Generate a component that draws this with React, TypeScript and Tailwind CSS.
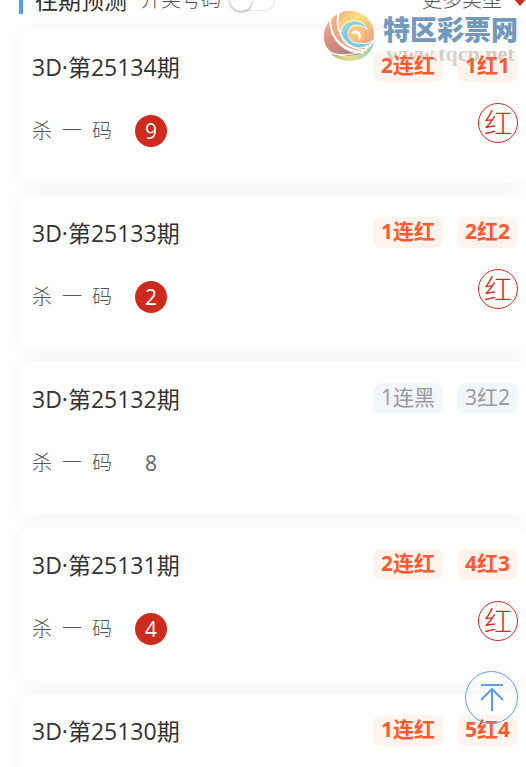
import React, { useState } from 'react';

interface IForecast {
	issue: string;
	code: number;
	hit: boolean;
	streak: string;
	record: string;
}

const forecasts: IForecast[] = [
	{ issue: '25134', code: 9, hit: true, streak: '2连红', record: '1红1' },
	{ issue: '25133', code: 2, hit: true, streak: '1连红', record: '2红2' },
	{ issue: '25132', code: 8, hit: false, streak: '1连黑', record: '3红2' },
	{ issue: '25131', code: 4, hit: true, streak: '2连红', record: '4红3' },
	{ issue: '25130', code: 6, hit: true, streak: '1连红', record: '5红4' },
];

const Badge: React.FC<{ hit: boolean; text: string }> = ({ hit, text }) => (
	<span
		className={
			hit
				? 'h-[31px] rounded-lg bg-[#fff4ed] px-2 text-[21px] leading-7 font-bold text-[#ff5a31]'
				: 'h-[31px] rounded-lg bg-[#f2f6fa] px-2 text-[21px] leading-7 text-[#999]'
		}
	>
		{text}
	</span>
);

const ForecastCard: React.FC<{ forecast: IForecast }> = ({ forecast }) => {
	const { issue, code, hit, streak, record } = forecast;

	return (
		<li className="flex h-[153px] flex-col rounded-xl bg-white pr-[10px] pl-[13px] shadow-[0_0_20px_rgba(0,0,0,0.05)]">
			<div className="flex items-start justify-between pt-[21px]">
				<h3 className="text-[23px] leading-8 text-[#333]">3D·第{issue}期</h3>
				<div className="flex gap-[14px]">
					<Badge hit={hit} text={streak} />
					<Badge hit={hit} text={record} />
				</div>
			</div>
			<div className="flex items-start justify-between pt-5">
				<div className="flex items-center pt-3">
					<span className="w-20 text-xl leading-8 font-light text-[#555] [text-align-last:justify]">杀 一 码</span>
					<span
						className={
							hit
								? 'ml-[23px] size-8 rounded-full bg-[#cf2a1e] text-center text-[21px] leading-8 text-white'
								: 'ml-[23px] size-8 text-center text-[21px] leading-8 text-[#666]'
						}
					>
						{code}
					</span>
				</div>
				{hit && (
					<span className="size-10 rounded-full border border-[#cf2a1e] text-center text-[28px] leading-[38px] font-light text-[#cf2a1e]">
						红
					</span>
				)}
			</div>
		</li>
	);
};

const Swirl: React.FC = () => (
	<svg viewBox="0 0 52 52" className="size-[52px]" aria-hidden="true">
		<defs>
			<linearGradient id="outer" x1="0.1" y1="0" x2="0.6" y2="1">
				<stop offset="0" stopColor="#f3b295" />
				<stop offset="0.5" stopColor="#d98c7c" />
				<stop offset="1" stopColor="#b08080" />
			</linearGradient>
			<linearGradient id="band" x1="0.2" y1="0" x2="0.6" y2="1">
				<stop offset="0" stopColor="#f4b08e" />
				<stop offset="0.6" stopColor="#f0a184" />
				<stop offset="1" stopColor="#eab184" />
			</linearGradient>
			<linearGradient id="gold" x1="0" y1="0" x2="1" y2="1">
				<stop offset="0" stopColor="#f3a985" />
				<stop offset="0.35" stopColor="#fbe47b" />
				<stop offset="0.65" stopColor="#f6bc80" />
				<stop offset="1" stopColor="#e88e74" />
			</linearGradient>
			<linearGradient id="cool" x1="0" y1="0" x2="1" y2="1">
				<stop offset="0" stopColor="#b4e2c0" />
				<stop offset="0.4" stopColor="#72c8e2" />
				<stop offset="1" stopColor="#8ccfe0" />
			</linearGradient>
			<linearGradient id="leaf" x1="0" y1="0" x2="1" y2="0">
				<stop offset="0" stopColor="#b9a97a" />
				<stop offset="0.45" stopColor="#e4e088" />
				<stop offset="1" stopColor="#86cdb8" />
			</linearGradient>
		</defs>
		<circle cx="26" cy="26" r="25" fill="#fff" />
		<path d="M7 10C1 17-1 27 3 36c3 5 7 8 12 8 10 3 20 2 27-1C22 42 6 31 7 10Z" fill="url(#outer)" />
		<path d="M15 4c-3 1-5 3-7 6 0 19 14 30 33 31l4-3C27 39 11 26 15 4Z" fill="url(#band)" />
		<path
			d="M17 3C26-1 38 1 45 9c6 7 7 14 5 21-2 6-8 8-14 8-12-1-18-9-20-17-1-7-1-12 1-18Z"
			fill="url(#gold)"
		/>
		<path
			d="M29 11c-8 1-12 7-11 14 1 8 9 13 17 13 6 0 12-3 15-8-4 3-8 4-12 3-8 1-13-3-13-9s4-9 9-9c4 0 8 2 10 5-2-6-8-10-15-9Z"
			fill="url(#cool)"
			stroke="#fff"
			strokeWidth="1"
		/>
		<path
			d="M25 25c0-5 4-8 8-8 6 0 9 5 8 10-1 4-5 6-8 5 4-1 5-4 4-7-2-4-6-4-8-1-1 2-1 4 0 6-3-1-4-3-4-5Z"
			fill="#f5c489"
		/>
		<path d="M28 24c1-3 5-5 8-2 3 2 2 7-1 9 1-3 1-5-1-7-2-1-4-1-6 0Z" fill="#fff" />
		<path d="M7 43c12 5 27 4 36-3 4-3 6-5 8-9-1 8-6 15-14 18-10 4-22 2-30-6Z" fill="url(#leaf)" />
		<path d="M7 10c0 21 15 33 34 33M15 4c-4 22 11 36 29 36" fill="none" stroke="#fff" strokeWidth="1.5" />
		<path d="M4 41c13 6 30 5 41-4" fill="none" stroke="#fff" strokeWidth="1" />
	</svg>
);

const App: React.FC = () => {
	const [showDraw, setShowDraw] = useState(false);

	return (
		<div className="h-screen overflow-hidden bg-white font-['Open_Sans','Noto_Sans_CJK_SC',sans-serif]">
			<header className="-mt-[18px] flex h-9 items-center pl-[19px]">
				<span className="h-7 w-1 bg-[#559bf0]" />
				<h2 className="ml-3 text-[23px] leading-9 text-[#333]">往期预测</h2>
				<label htmlFor="draw" className="ml-[14px] text-xl leading-9 font-light text-[#555]">
					开奖号码
				</label>
				<span className="ml-[9px] flex h-[22px] w-[45px] rounded-full border border-[#e2e2e2] bg-white">
					<input
						id="draw"
						type="checkbox"
						checked={showDraw}
						onChange={() => setShowDraw(!showDraw)}
						className="-mt-px -ml-px size-[22px] appearance-none rounded-full bg-white shadow-[0_1px_3px_rgba(0,0,0,0.4)] checked:ml-[22px]"
					/>
				</span>
				<button className="ml-auto flex items-center gap-3 text-xl leading-9 font-light text-[#555]">
					更多类型
					<svg viewBox="0 0 12 12" className="size-3" aria-hidden="true">
						<path d="M0 5h12L6 12Z" fill="#cf2a1e" />
					</svg>
				</button>
			</header>
			<ul className="-mr-[2px] ml-[19px] flex flex-col gap-[13px] pt-3">
				{forecasts.map((forecast) => (
					<React.Fragment key={forecast.issue}>
						<ForecastCard forecast={forecast} />
					</React.Fragment>
				))}
			</ul>
			<div className="pointer-events-none absolute top-[10px] right-2 flex gap-2">
				<Swirl />
				<div className="flex flex-col pt-1">
					<span className="text-[27px] leading-8 font-black text-[#7399bd]">特区彩票网</span>
					<span className="-mt-1 text-center font-['Liberation_Serif',serif] text-[22px] leading-6 font-bold text-[#8c8c8c]/40">
						www.tqcp.net
					</span>
				</div>
			</div>
			<button
				aria-label="返回顶部"
				className="fixed right-2 bottom-[43px] flex size-[53px] items-center justify-center rounded-full border border-[#5b9dec]"
			>
				<svg viewBox="0 0 24 30" className="h-[30px] w-6" fill="none" stroke="#5b9dec" strokeWidth="2" aria-hidden="true">
					<path d="M1 2h22M12 28V7M1 17 12 6l11 11" />
				</svg>
			</button>
		</div>
	);
};
export default App;
